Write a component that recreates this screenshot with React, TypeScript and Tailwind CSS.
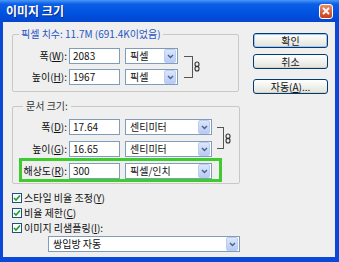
import React from "react";

const Check = () => (
  <div className="w-[10px] h-[10px] border border-[#1c5180] bg-white flex items-center justify-center">
    <svg width="8" height="8" viewBox="0 0 8 8">
      <polyline points="1,4 3,6 7,1.5" fill="none" stroke="#21a121" strokeWidth="1.7" />
    </svg>
  </div>
);

const Arrow = () => (
  <div className="w-[12px] h-[14px] mr-[1px] rounded-[2px] bg-linear-to-b from-[#dce6fc] to-[#b7cbf4] border border-[#bccdf2] flex items-center justify-center">
    <svg width="7" height="5" viewBox="0 0 7 5">
      <polyline points="1,1 3.5,3.5 6,1" fill="none" stroke="#4d6185" strokeWidth="1.4" />
    </svg>
  </div>
);

const Input = ({ value }: { value: string }) => (
  <div className="ml-[2px] w-[51px] h-[16px] border border-[#7f9db9] bg-white pl-[3px] flex items-center text-[10px] text-[#111]">
    {value}
  </div>
);

const Select = ({ value, w }: { value: string; w: string }) => (
  <div className={`${w} h-[16px] border border-[#7f9db9] bg-white flex items-center justify-between text-[10px] text-[#111]`}>
    <span className="pl-[4px]">{value}</span>
    <Arrow />
  </div>
);

const Link = () => (
  <svg width="6" height="11" viewBox="0 0 6 11" className="ml-[1px]">
    <rect x="1" y="1" width="4" height="4.6" rx="2" fill="none" stroke="#333" strokeWidth="1.1" />
    <rect x="1" y="5.4" width="4" height="4.6" rx="2" fill="none" stroke="#333" strokeWidth="1.1" />
  </svg>
);

const Label = ({ text, k, w }: { text: string; k: string; w: string }) => (
  <div className={`${w} text-right text-[10px] text-[#111]`}>
    {text}(<span className="underline">{k}</span>):
  </div>
);

const Button = ({ children, def }: { children: React.ReactNode; def?: boolean }) => (
  <div
    className={`w-[75px] h-[15px] rounded-[3px] border border-[#003c74] bg-linear-to-b from-white to-[#e3e3db] flex items-center justify-center text-[10px] text-[#111] ${
      def ? "shadow-[inset_0_0_0_1px_#a9c4f2]" : "shadow-[inset_0_-1px_0_#d6d0c5]"
    }`}
  >
    {children}
  </div>
);

export default function App() {
  return (
    <div className="w-[339px] h-[262px] bg-[#0a48d8] flex flex-col font-['Noto_Sans_CJK_KR','Noto_Sans',sans-serif] leading-[12px]">
      <div className="h-[22px] flex items-center justify-between bg-[linear-gradient(to_bottom,#4a98f7_0%,#0b5fe6_18%,#0052e0_60%,#0446cf_100%)]">
        <span className="ml-[6px] text-[12px] font-bold text-white [text-shadow:1px_1px_0_#0a2a8a]">이미지 크기</span>
        <div className="mr-[6px] w-[14px] h-[15px] rounded-[3px] border border-white bg-linear-to-b from-[#ee8a64] to-[#c83b18] flex items-center justify-center">
          <svg width="8" height="8" viewBox="0 0 8 8">
            <path d="M1 1 L7 7 M7 1 L1 7" stroke="white" strokeWidth="1.8" />
          </svg>
        </div>
      </div>

      <div className="flex-1 mx-[3px] mr-[4px] mb-[5px] bg-[#efefef] flex">
        <div className="pl-[9px] pt-[6px] flex flex-col">
          <fieldset className="w-[227px] border border-[#c9c9c4] rounded-[2px] pt-[8px] pb-[6px]">
            <legend className="ml-[6px] px-[2px] text-[10px] text-[#1f56c4]">픽셀 치수: 11.7M (691.4K이었음)</legend>
            <div className="flex items-center">
              <div className="flex flex-col gap-[5px]">
                <div className="flex items-center">
                  <Label text="폭" k="W" w="w-[54px]" />
                  <Input value="2083" />
                  <div className="ml-[5px]"><Select value="픽셀" w="w-[53px]" /></div>
                </div>
                <div className="flex items-center">
                  <Label text="높이" k="H" w="w-[54px]" />
                  <Input value="1967" />
                  <div className="ml-[5px]"><Select value="픽셀" w="w-[53px]" /></div>
                </div>
              </div>
              <div className="ml-[6px] w-[9px] h-[22px] border-t border-r border-b border-[#555]" />
              <Link />
            </div>
          </fieldset>

          <fieldset className="mt-[8px] w-[228px] border border-[#c9c9c4] rounded-[2px] pt-[7px] pb-[1px]">
            <legend className="ml-[10px] px-[3px] text-[10px] text-[#333]">문서 크기:</legend>
            <div className="flex items-center">
              <div className="flex flex-col gap-[6px]">
                <div className="flex items-center">
                  <Label text="폭" k="D" w="w-[54px]" />
                  <Input value="17.64" />
                  <div className="ml-[5px]"><Select value="센티미터" w="w-[87px]" /></div>
                </div>
                <div className="flex items-center">
                  <Label text="높이" k="G" w="w-[54px]" />
                  <Input value="16.65" />
                  <div className="ml-[5px]"><Select value="센티미터" w="w-[87px]" /></div>
                </div>
              </div>
              <div className="ml-[5px] w-[7px] h-[22px] border-t border-r border-b border-[#555]" />
              <Link />
            </div>
            <div className="mt-[1px] ml-[6px] w-[203px] border-[3px] border-[#3fcb2e] pt-[2px] flex items-center">
              <Label text="해상도" k="R" w="w-[45px]" />
              <Input value="300" />
              <div className="ml-[5px]"><Select value="픽셀/인치" w="w-[87px]" /></div>
            </div>
          </fieldset>

          <div className="mt-[6px] flex flex-col text-[10px] text-[#111]">
            <div className="h-[15px] flex items-center gap-[2px]">
              <Check />
              <span>스타일 비율 조정(<span className="underline">Y</span>)</span>
            </div>
            <div className="h-[15px] flex items-center gap-[2px]">
              <Check />
              <span>비율 제한(<span className="underline">C</span>)</span>
            </div>
            <div className="h-[15px] flex items-center gap-[2px]">
              <Check />
              <span>이미지 리샘플링(<span className="underline">I</span>):</span>
            </div>
            <div className="mt-[1px] ml-[36px]">
              <Select value="쌍입방 자동" w="w-[192px]" />
            </div>
          </div>
        </div>

        <div className="ml-[13px] pt-[11px] flex flex-col">
          <Button def>확인</Button>
          <div className="mt-[6px]">
            <Button>취소</Button>
          </div>
          <div className="mt-[10px]">
            <Button>
              자동(<span className="underline">A</span>)...
            </Button>
          </div>
        </div>
      </div>
    </div>
  );
}
